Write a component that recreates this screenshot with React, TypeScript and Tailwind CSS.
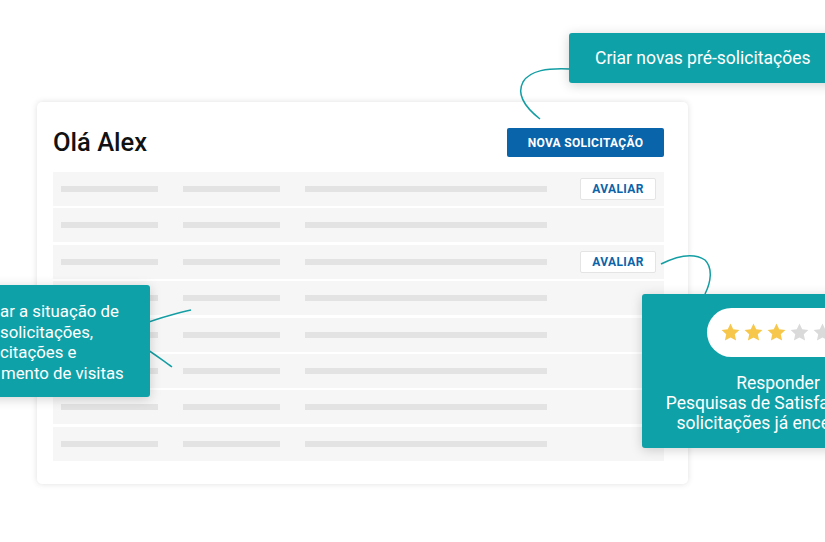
import React from "react";

const ROWS = [true, false, true, false, false, false, false, false];

function Star({ filled }: { filled: boolean }) {
  return (
    <svg width="21" height="21" viewBox="0 0 24 24" className="shrink-0">
      <path
        d="M12 1.8l3.1 6.6 7.1.8-5.3 4.9 1.5 7.1L12 17.6l-6.4 3.6 1.5-7.1-5.3-4.9 7.1-.8z"
        fill={filled ? "#f7c74b" : "#dadada"}
      />
    </svg>
  );
}

function Row({ action }: { action: boolean }) {
  return (
    <div className="flex h-[34px] items-center bg-[#f6f6f6] pl-[8px] pr-[8px]">
      <div className="h-[6px] w-[97px] bg-[#e3e3e3]" />
      <div className="ml-[25px] h-[6px] w-[97px] bg-[#e3e3e3]" />
      <div className="ml-[25px] h-[6px] w-[242px] bg-[#e3e3e3]" />
      {action ? (
        <div className="ml-auto flex h-[22px] w-[76px] items-center justify-center rounded-[2px] border border-[#e4e4e4] bg-white text-[12px] font-bold tracking-[0.4px] text-[#0b64a9]">
          AVALIAR
        </div>
      ) : null}
    </div>
  );
}

export default function App() {
  return (
    <div className="relative h-[542px] w-[825px] overflow-hidden bg-white font-['Roboto',sans-serif]">
      <div className="ml-[37px] mt-[102px] h-[382px] w-[651px] rounded-[5px] bg-white pl-[16px] pr-[24px] pt-[26px] shadow-[0_0_6px_rgba(0,0,0,0.13)]">
        <div className="flex h-[29px] items-center justify-between">
          <h1 className="text-[25.5px] font-medium leading-none text-[#111]">Olá Alex</h1>
          <div className="flex h-[29px] w-[157px] items-center justify-center rounded-[2px] bg-[#0a64a9] text-[12px] font-bold tracking-[0.3px] text-white">
            NOVA SOLICITAÇÃO
          </div>
        </div>
        <div className="mt-[15px] flex flex-col gap-[2.4px]">
          {ROWS.map((a, i) => (
            <Row key={i} action={a} />
          ))}
        </div>
      </div>

      <svg className="pointer-events-none absolute left-0 top-0" width="825" height="542" fill="none">
        <path d="M570 69 C548 68 530 70 523 82 C516 95 526 108 540 119" stroke="#139ea4" strokeWidth="1.5" />
        <path d="M661 264 C675 257 693 252 705 260 C713 268 711 282 705 294" stroke="#139ea4" strokeWidth="1.5" />
        <path d="M140 325 C160 318 175 313 191 310" stroke="#139ea4" strokeWidth="1.5" />
        <path d="M140 345 C152 352 162 360 172 367" stroke="#139ea4" strokeWidth="1.5" />
      </svg>

      <div className="absolute left-[569px] top-[33px] flex h-[50px] w-[280px] items-center rounded-[3px] bg-[#0fa1a8] pl-[26px] text-[17.5px] text-white shadow-[0_2px_12px_rgba(0,0,0,0.18)]">
        Criar novas pré-solicitações
      </div>

      <div className="absolute left-[-20px] top-[285px] flex h-[112px] w-[170px] flex-col justify-center rounded-[3px] bg-[#0fa1a8] pt-[2px] text-[16.8px] leading-[20.5px] text-white shadow-[0_2px_12px_rgba(0,0,0,0.18)]">
        <span className="pl-[20px]">ar a situação de</span>
        <span className="pl-[20px]">solicitações,</span>
        <span className="pl-[20px]">citações e</span>
        <span className="pl-[21px]">mento de visitas</span>
      </div>

      <div className="absolute left-[642px] top-[294px] h-[154px] w-[272px] rounded-[3px] bg-[#0fa1a8] text-white shadow-[0_2px_12px_rgba(0,0,0,0.18)]">
        <div className="ml-[65px] mt-[14px] flex h-[49px] w-[200px] items-center gap-[2px] rounded-full bg-white pl-[13px]">
          <Star filled />
          <Star filled />
          <Star filled />
          <Star filled={false} />
          <Star filled={false} />
        </div>
        <div className="mt-[16px] text-center text-[17.5px] leading-[20px]">
          Responder
          <br />
          Pesquisas de Satisfação das
          <br />
          solicitações já encerradas
        </div>
      </div>
    </div>
  );
}
